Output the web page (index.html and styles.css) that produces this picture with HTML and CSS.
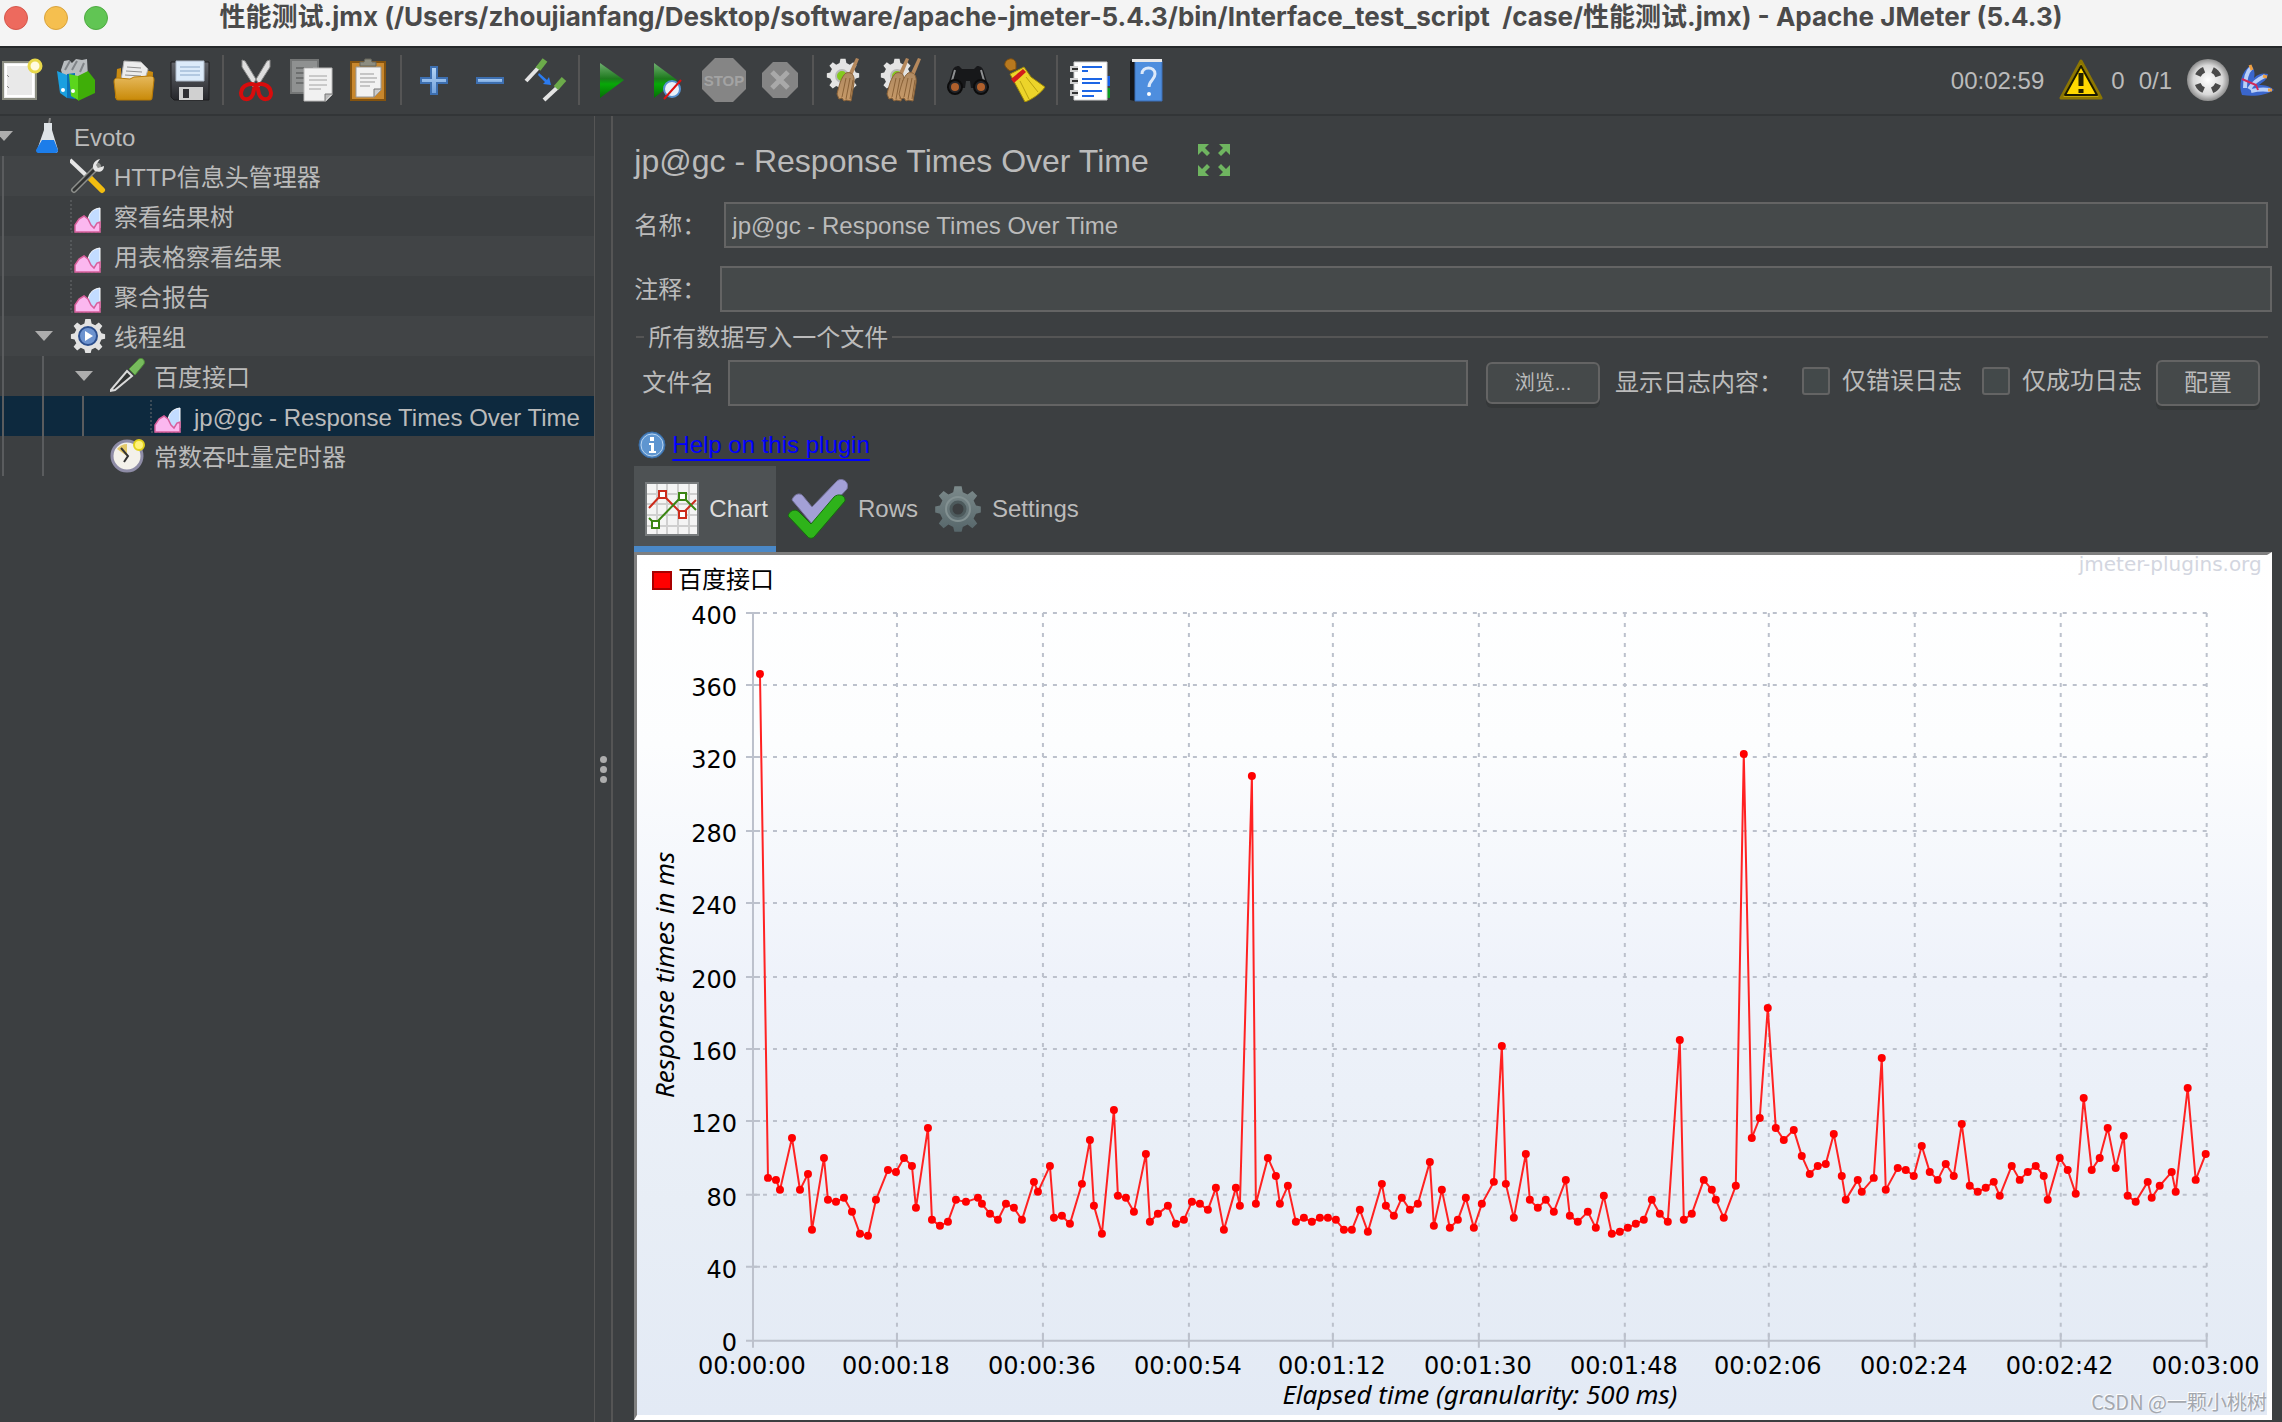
FILE: index.html
```
<!DOCTYPE html>
<html lang="zh-CN">
<head>
<meta charset="utf-8">
<title>性能测试.jmx - Apache JMeter (5.4.3)</title>
<link rel="stylesheet" href="styles.css">
</head>
<body>
<svg class="defs" aria-hidden="true">
  <defs>
    <linearGradient id="green" x1="0" y1="0" x2="0" y2="1"><stop offset="0" stop-color="#6fae6f"/><stop offset=".45" stop-color="#1d7a1d"/><stop offset=".6" stop-color="#08a808"/><stop offset="1" stop-color="#067006"/></linearGradient>
    <linearGradient id="gold" x1="0" y1="0" x2="0" y2="1"><stop offset="0" stop-color="#e6b95c"/><stop offset="1" stop-color="#c98a08"/></linearGradient>
    <linearGradient id="blue" x1="0" y1="0" x2="0" y2="1"><stop offset="0" stop-color="#b5d4f5"/><stop offset="1" stop-color="#6fa0dc"/></linearGradient>
    <linearGradient id="dark" x1="0" y1="0" x2="0" y2="1"><stop offset="0" stop-color="#62646a"/><stop offset="1" stop-color="#26272b"/></linearGradient>
    <linearGradient id="slate" x1="0" y1="0" x2="0" y2="1"><stop offset="0" stop-color="#7c8a8b"/><stop offset="1" stop-color="#56666a"/></linearGradient>
    <linearGradient id="straw" x1="0" y1="0" x2="0" y2="1"><stop offset="0" stop-color="#b08a62"/><stop offset="1" stop-color="#c79a68"/></linearGradient>
    <radialGradient id="ball"><stop offset="0" stop-color="#fff"/><stop offset=".7" stop-color="#d8d8d8"/><stop offset="1" stop-color="#8c8c8c"/></radialGradient>
    <symbol id="result" viewBox="0 0 36 36">
      <path d="M1 2v32h31" fill="none" stroke="#6b6e70" stroke-width="1" stroke-dasharray="2 2"/>
      <path d="M18 24c0-8 4-13 12-14v20l-4-2-3 3z" fill="#c3dcff" stroke="#fff"/>
      <path d="M5 34v-7l4-6 5-3 4 3 3 6 3 3 3-5 3-1v10z" fill="#fbb8ef" stroke="#d85f9c" stroke-width="1.500"/>
    </symbol>
    <symbol id="gearshape" viewBox="0 0 40 40">
      <path d="M17 1h6l1 5 4 2 4-3 4 4-3 4 2 4 4 1v5l-4 1-2 4 3 4-4 4-4-3-4 2-1 4h-6l-1-4-4-2-4 3-4-4 3-4-2-4-4-1v-5l4-1 2-4-3-4 4-4 4 3 4-2z"/>
    </symbol>
    <symbol id="broom" viewBox="0 0 24 44">
      <path d="M20 0l3 1-7 17-4-1z" fill="#b5885c"/>
      <path d="M10 15c6-2 9 3 8 10l-3 18-5-1-2 1-2-3-3 1-2-5c2-8 4-17 9-21z" fill="url(#straw)" stroke="#8a6238"/>
      <path d="M10 20L6 39M14 20l-4 21M17 22l-3 19" stroke="#8a6238" fill="none"/>
    </symbol>
    <marker id="dot" viewBox="-5 -5 10 10" markerWidth="10" markerHeight="10" markerUnits="userSpaceOnUse"><circle r="4" fill="#f00"/></marker>
  </defs>
</svg>

<header class="titlebar">
  <div class="lights"><span class="light close"></span><span class="light min"></span><span class="light max"></span></div>
  <h1 class="title">性能测试.jmx (/Users/zhoujianfang/Desktop/software/apache-jmeter-5.4.3/bin/Interface_test_script&nbsp; /case/性能测试.jmx) - Apache JMeter (5.4.3)</h1>
</header>

<nav class="toolbar">
  <button class="tool" aria-label="新建"><svg viewBox="0 0 44 44"><path d="M3 4h33v37H3z" fill="#ececec" stroke="#8a8c80" stroke-width="2"/><path d="M6 7h27v31H6z" fill="#e9e9e9" stroke="#fff" stroke-width="2"/><circle cx="35" cy="8" r="6" fill="#fffbe0" stroke="#e8d84a" stroke-width="3"/><path d="M7 17l2 2M7 28l2 2" stroke="#888"/></svg></button>
  <button class="tool" aria-label="模板"><svg viewBox="0 0 44 44"><path d="M5 12l3-9 5-1 3 3 4-4 6 1 5-1 1 18H7z" fill="#b9bdc0"/><path d="M9 12l5-9M16 12l5-9M24 14l4-9" stroke="#808488" fill="none" stroke-width="2"/><path d="M1 13l10 4v23l-7-5z" fill="#1aa0e0"/><path d="M11 16l8-1v26l-8-1z" fill="#0b72b8"/><path d="M13 16l9 2v24l-7-4z" fill="#5bd61c"/><path d="M22 18l10-5 7 9v13l-17 8z" fill="#3fae08"/><circle cx="7" cy="32" r="2" fill="#fff"/><circle cx="17" cy="33" r="2" fill="#fff"/></svg></button>
  <button class="tool" aria-label="打开"><svg viewBox="0 0 44 44"><path d="M5 11l4-1v30H3zM34 12l7 2-1 26h-6z" fill="#c98a10"/><path d="M12 3l17 1 7 7-4 14-23-3z" fill="#ececec" stroke="#b0b0b0"/><path d="M15 9l14 1M14 13l16 1M13 17l16 1" stroke="#8e8e8e"/><path d="M2 24c0-3 1-4 4-4l12 1 4-2 16-1c3 0 4 1 4 4l-2 18c0 2-1 2-3 2H7c-2 0-3 0-3-2z" fill="url(#gold)" stroke="#b87a05"/></svg></button>
  <button class="tool" aria-label="保存"><svg viewBox="0 0 44 44"><path d="M3 4h38v38H6l-3-3z" fill="url(#dark)" stroke="#1c1c1e"/><path d="M8 3h28v20H8z" fill="#dcebfa" stroke="#b0bccb"/><path d="M12 9h20M12 13h20M12 17h20" stroke="#8aa7c8"/><path d="M11 29h24v13H11z" fill="#d0d0d0"/><path d="M15 31h6v9h-6z" fill="#303034"/></svg></button>
  <span class="sep"></span>
  <button class="tool" aria-label="剪切"><svg viewBox="0 0 44 44"><path d="M8 2l3 1 15 25-4 3L8 9zM36 2l-3 1-15 25 4 3L36 9z" fill="#dedede" stroke="#8c8c8c"/><path d="M21 27c-4-2-13-1-14 8 0 8 9 8 12 1zM23 27c4-2 13-1 14 8 0 8-9 8-12 1z" fill="none" stroke="#d80c0c" stroke-width="4"/></svg></button>
  <button class="tool" aria-label="复制"><svg viewBox="0 0 44 44"><path d="M1 2h27v33H1z" fill="#8f9191" stroke="#747676" stroke-width="2"/><path d="M6 10h17M6 15h17M6 20h17M6 25h12" stroke="#6d6f6f" stroke-width="2"/><path d="M14 10h28v27l-6 6H14z" fill="#f1f1f1" stroke="#b9b9b9"/><path d="M42 36h-7v7" fill="#bbb" stroke="#777"/><path d="M19 18h18M19 22h18M19 27h18M19 31h12" stroke="#a2a2a2"/></svg></button>
  <button class="tool" aria-label="粘贴"><svg viewBox="0 0 44 44"><path d="M5 4h34v38H5z" fill="#c8872d" stroke="#84530f" stroke-width="2"/><path d="M10 9h25v23l-7 7H10z" fill="#f2f2f2" stroke="#999"/><path d="M35 31h-7v8" fill="#ccc" stroke="#777"/><path d="M14 16h14M14 20h17M14 24h15M14 28h10" stroke="#999"/><path d="M14 8V4h4l1-3h6l1 3h4v4z" fill="#8d8d80" stroke="#66665c"/></svg></button>
  <span class="sep"></span>
  <button class="tool" aria-label="展开"><svg viewBox="0 0 44 44"><path d="M19 9h6v11h10v5H25v11h-6V25H9v-5h10z" fill="url(#blue)" stroke="#3d6fb0" stroke-width="2"/></svg></button>
  <button class="tool" aria-label="折叠"><svg viewBox="0 0 44 44"><path d="M9 20h26v5H9z" fill="url(#blue)" stroke="#3d6fb0" stroke-width="2"/></svg></button>
  <button class="tool" aria-label="切换"><svg viewBox="0 0 44 44"><path d="M2 23L15 9" stroke="#e4e4e4" stroke-width="4"/><path d="M14 11l7-9" stroke="#6cab4a" stroke-width="6"/><path d="M20 42l14-13" stroke="#e4e4e4" stroke-width="4"/><path d="M32 30l8-9" stroke="#6cab4a" stroke-width="6"/><path d="M15 15l8 7 2-3 2 8-8-1 2-2-7-7z" fill="#2b7bf0"/></svg></button>
  <span class="sep"></span>
  <button class="tool" aria-label="启动"><svg viewBox="0 0 44 44"><path d="M10 5l24 17-24 18z" fill="url(#green)"/></svg></button>
  <button class="tool" aria-label="不停顿启动"><svg viewBox="0 0 44 44"><path d="M8 5l23 17L8 40z" fill="url(#green)"/><circle cx="26" cy="31" r="8" fill="#e8f0fa" stroke="#5590cf" stroke-width="2"/><path d="M18 41l17-19" stroke="#e01010" stroke-width="2"/></svg></button>
  <button class="tool" aria-label="停止" disabled><svg viewBox="0 0 44 44"><path d="M13 0h18l13 13v18L31 44H13L0 31V13z" fill="#858585"/><text class="stop" x="22" y="28" text-anchor="middle">STOP</text></svg></button>
  <button class="tool" aria-label="关闭" disabled><svg viewBox="0 0 44 44"><path d="M15 4h14l11 11v14L29 40H15L4 29V15z" fill="#858585"/><path d="M14 14l16 16M30 14L14 30" stroke="#a9a9a9" stroke-width="5"/></svg></button>
  <span class="sep"></span>
  <button class="tool" aria-label="清除"><svg viewBox="0 0 44 44"><use href="#gearshape" width="34" height="34" x="2" fill="#e4e4e4"/><circle cx="18" cy="18" r="6" fill="#84c91f" stroke="#b9b9b9" stroke-width="2"/><use href="#broom" x="10" y="0" width="28" height="44"/></svg></button>
  <button class="tool" aria-label="清除全部"><svg viewBox="0 0 44 44"><use href="#gearshape" width="34" height="34" x="0" fill="#e4e4e4"/><circle cx="17" cy="18" r="6" fill="#84c91f" stroke="#b9b9b9" stroke-width="2"/><use href="#broom" x="4" y="0" width="28" height="44"/><use href="#broom" x="16" y="0" width="28" height="44"/></svg></button>
  <span class="sep"></span>
  <button class="tool" aria-label="查找"><svg viewBox="0 0 44 44"><path d="M6 14c1-4 3-6 7-6l3 3h12l3-3c4 0 6 2 7 6l5 16H25l-1-7h-4l-1 7H1z" fill="#17181a"/><path d="M9 12l-4 14M35 12l4 14" stroke="#8e9092" stroke-width="2"/><circle cx="9" cy="29" r="7" fill="#25262a" stroke="#0c0c0c" stroke-width="2"/><circle cx="35" cy="29" r="7" fill="#25262a" stroke="#0c0c0c" stroke-width="2"/><circle cx="9" cy="29" r="4" fill="#b0602c"/><circle cx="35" cy="29" r="4" fill="#b0602c"/></svg></button>
  <button class="tool" aria-label="重置查找"><svg viewBox="0 0 44 44"><path d="M4 3c4-4 9-2 10 2v6l-6 2c-6-4-6-7-4-10z" fill="#b8791f" stroke="#7e4f0e"/><path d="M8 16l14-7 7 10 14 10c-4 6-12 12-20 15z" fill="#ecd42a" stroke="#9c8708"/><path d="M18 23l9 18M24 19l12 15" stroke="#b8a010"/><path d="M9 21l12-10 3 3-12 11z" fill="#d21b1b"/></svg></button>
  <span class="sep"></span>
  <button class="tool" aria-label="函数助手"><svg viewBox="0 0 44 44"><path d="M36 18h6v10h-6z" fill="#1560e8"/><path d="M36 30h6v10h-6z" fill="#0b9a20"/><path d="M6 4h33v38H6z" fill="#fff" stroke="#d0d0d0"/><path d="M14 9h20M14 13h6M14 21h20M14 25h18M14 33h20M14 38h12" stroke="#1d66e5" stroke-width="2"/><path d="M2 11h8M2 23h8M2 35h8" stroke="#d0d0d0" stroke-width="6"/><path d="M4 11h6M4 23h6M4 35h6" stroke="#333" stroke-width="2"/></svg></button>
  <button class="tool" aria-label="帮助"><svg viewBox="0 0 44 44"><path d="M6 3l5-1v41l-5-1z" fill="#16181c"/><path d="M11 3h27v40H11z" fill="#4e8ede" stroke="#3a6fb8"/><path d="M8 1h30v3H8z" fill="#e8e8e8"/><path d="M18 16c0-8 13-8 13 0 0 6-6 6-6 13" fill="none" stroke="#dce9fa" stroke-width="3"/><circle cx="25" cy="36" r="2" fill="#fff"/></svg></button>
  <div class="status">
    <output class="clock">00:02:59</output>
    <svg class="warn" viewBox="0 0 44 44"><path d="M22 3l20 37H2z" fill="#f7d50c" stroke="#8c7602" stroke-width="3" stroke-linejoin="round"/><path d="M22 8l16 29H6z" fill="#ffd800" stroke="#1c1a00" stroke-width="2" stroke-linejoin="round"/><path d="M22 15v13M22 31v4" stroke="#221f00" stroke-width="5"/></svg>
    <output class="errors">0</output>
    <output class="threads">0/1</output>
    <svg class="remote" viewBox="0 0 44 44"><circle cx="22" cy="22" r="21" fill="url(#ball)"/><circle cx="22" cy="22" r="11" fill="none" stroke="#4a4a4a" stroke-width="6" stroke-dasharray="8.640 8.640" stroke-dashoffset="-4.320"/></svg>
    <svg class="feather" viewBox="0 0 36 36"><path d="M3 33C-1 24 2 9 12 3c4 5 4 9 3 13 5-5 10-5 14-4-1 6-5 8-9 11 6 0 11 1 15 5-7 5-20 7-32 5z" fill="#3a66cc"/><path d="M6 26C6 17 8 10 12 6M10 27c4-6 9-10 16-13M12 29c8-2 12-2 19-1" stroke="#b9cff8" stroke-width="4" fill="none"/><path d="M3 17l14 6 2 5" stroke="#d02a5a" stroke-width="2" fill="none"/><path d="M11 3l2 5M24 14l4 1M29 28h4" stroke="#f0a040" stroke-width="3"/></svg>
  </div>
</nav>

<main class="work">
  <aside class="side">
    <ul class="tree">
      <li class="row"><span class="twist"><svg class="arrow" viewBox="0 0 18 10"><path d="M0 0h18L9 10z"/></svg></span><svg class="ticon" viewBox="0 0 36 36"><path d="M20 0l-1 6" stroke="#888" stroke-width="2"/><path d="M14 5h8v7l6 20c0 3-2 3-4 3H10c-2 0-3-1-3-3l7-20z" fill="#dfe4e8"/><path d="M12 22h12l4 10c0 3-2 3-4 3H10c-2 0-4 0-4-3z" fill="#1c7dea"/></svg><span class="name">Evoto</span></li>
      <li class="row"><i class="guide"></i><span class="twist"></span><svg class="ticon" viewBox="0 0 36 36"><path d="M0 2l18 17" stroke="#e6e6e6" stroke-width="4"/><path d="M20 20l12 12" stroke="#f2bd10" stroke-width="6" stroke-linecap="round"/><path d="M28 8L4 32" stroke="#8d8f8c" stroke-width="6" stroke-linecap="round"/><path d="M26 10L4 32" stroke="#303232" stroke-width="3" stroke-linecap="round"/><path d="M30 1l-4 6 2 3 6-2c0 5-4 7-9 5-4-3-2-11 5-12z" fill="#e6e6e6"/></svg><span class="name">HTTP信息头管理器</span></li>
      <li class="row"><i class="guide"></i><span class="twist"></span><svg class="ticon"><use href="#result"/></svg><span class="name">察看结果树</span></li>
      <li class="row"><i class="guide"></i><span class="twist"></span><svg class="ticon"><use href="#result"/></svg><span class="name">用表格察看结果</span></li>
      <li class="row"><i class="guide"></i><span class="twist"></span><svg class="ticon"><use href="#result"/></svg><span class="name">聚合报告</span></li>
      <li class="row"><i class="guide"></i><span class="twist"><svg class="arrow" viewBox="0 0 18 10"><path d="M0 0h18L9 10z"/></svg></span><svg class="ticon" viewBox="0 0 36 36"><use href="#gearshape" width="36" height="36" fill="#e2e2e2"/><circle cx="18" cy="18" r="9" fill="#6d93cf" stroke="#2c4f8e" stroke-width="2"/><path d="M15 13l8 5-8 5z" fill="#fff"/></svg><span class="name">线程组</span></li>
      <li class="row"><i class="guide"></i><i class="guide"></i><span class="twist"><svg class="arrow" viewBox="0 0 18 10"><path d="M0 0h18L9 10z"/></svg></span><svg class="ticon" viewBox="0 0 36 36"><path d="M0 33l17-20 5 5L5 32z" fill="#303232" stroke="#dadada" stroke-width="2"/><path d="M19 11l8-8c3-5 9-2 7 3l-9 11z" fill="#77bb5d" stroke="#4d8a38"/></svg><span class="name">百度接口</span></li>
      <li class="row selected"><i class="guide"></i><i class="guide"></i><i class="guide"></i><span class="twist"></span><svg class="ticon"><use href="#result"/></svg><span class="name">jp@gc - Response Times Over Time</span></li>
      <li class="row"><i class="guide"></i><i class="guide"></i><span class="twist"></span><svg class="ticon" viewBox="0 0 36 36"><circle cx="17" cy="18" r="15" fill="#f3f1ea" stroke="#8e8ca6" stroke-width="3"/><path d="M17 18V6c-4 0-8 2-10 5z" fill="#e4c96a"/><path d="M11 10l7 8-4 6" stroke="#333" stroke-width="2" fill="none"/><circle cx="29" cy="7" r="5" fill="#fff27a" stroke="#e2d21c" stroke-width="2"/></svg><span class="name">常数吞吐量定时器</span></li>
    </ul>
  </aside>
  <div class="divider"><i></i><i></i><i></i></div>

  <section class="pane">
    <div class="head">
      <h2 class="heading">jp@gc - Response Times Over Time</h2>
      <svg class="expand" viewBox="0 0 34 34"><g fill="#6fb560"><path d="M1 1h11l-4 4 5 5-3 3-5-5-4 4z"/><path d="M33 1v11l-4-4-5 5-3-3 5-5-4-4z"/><path d="M1 33V22l4 4 5-5 3 3-5 5 4 4z"/><path d="M33 33H22l4-4-5-5 3-3 5 5 4-4z"/></g></svg>
    </div>
    <div class="field"><label for="name">名称：</label><input id="name" class="text" type="text" value="jp@gc - Response Times Over Time"></div>
    <div class="field wide"><label for="comment">注释：</label><input id="comment" class="text" type="text"></div>
    <fieldset class="file">
      <legend>所有数据写入一个文件</legend>
      <div class="filerow">
        <label for="fname">文件名</label><input id="fname" class="text" type="text">
        <button class="btn small">浏览...</button>
        <span class="log">显示日志内容：</span>
        <label class="check"><input type="checkbox">仅错误日志</label>
        <label class="check"><input type="checkbox">仅成功日志</label>
        <button class="btn">配置</button>
      </div>
    </fieldset>
    <div class="help">
      <svg viewBox="0 0 28 28"><circle cx="14" cy="14" r="13" fill="#4f86c2" stroke="#3a6ea8"/><circle cx="14" cy="14" r="11" fill="#5e95d0" stroke="#b8d4f0"/><path d="M12 6h4v4h-4zM11 12h5v8h2v2h-7v-2h2v-6h-2z" fill="#fff"/></svg>
      <a href="#help">Help on this plugin</a>
    </div>
    <div class="tabs" role="tablist">
      <button class="tab active" role="tab" aria-selected="true"><svg class="i54" viewBox="0 0 54 54"><path d="M1 1h52v52H1z" fill="#f4f4f4" stroke="#777b7d" stroke-width="2"/><path d="M12 2v50M22 2v50M33 2v50M44 2v50M2 12h50M2 22h50M2 33h50M2 44h50" stroke="#cfcfcf" stroke-width="2"/><path d="M4 26l13-14 20 20 14-14" fill="none" stroke="#cc2b1c" stroke-width="2"/><path d="M4 36l6 6 27-28 14 14" fill="none" stroke="#3a8512" stroke-width="2"/><path d="M14 9h7v7h-7zM34 29h7v7h-7z" fill="#fff" stroke="#cc2b1c" stroke-width="2"/><path d="M34 11h7v7h-7zM7 39h7v7H7z" fill="#fff" stroke="#3a8512" stroke-width="2"/></svg>Chart</button>
      <button class="tab rows" role="tab"><svg class="i60" viewBox="0 0 60 60"><path d="M4 21c2-6 8-8 11-4l9 11L49 2c4-4 13 0 10 8L25 46z" fill="#a3a0d6" stroke="#77749f"/><path d="M0 37c1-5 7-8 11-4l12 12 23-27c4-4 12-2 11 4L27 57c-2 3-6 3-8 0z" fill="#2eb31a" stroke="#176e0e"/></svg>Rows</button>
      <button class="tab" role="tab"><svg class="i48" viewBox="0 0 48 48"><use href="#gearshape" width="48" height="48" fill="url(#slate)"/><circle cx="24" cy="24" r="12" fill="none" stroke="#839192" stroke-width="2"/><circle cx="24" cy="24" r="7" fill="#3c3f41" stroke="#4d5a5c" stroke-width="3"/></svg>Settings</button>
    </div>
    <div class="panel">
      <svg class="chart" viewBox="637 555 1630 860" role="img" aria-label="Response Times Over Time">
        <path d="M653 572h18v17h-18z" fill="#f00" stroke="#a80000" stroke-width="2"/>
        <text class="legendtext" x="678" y="588">百度接口</text>
        <text class="brand" x="2262" y="571" text-anchor="end">jmeter-plugins.org</text>
        <path class="grid" d="M753 613H2207M753 685H2207M753 757H2207M753 831H2207M753 903H2207M753 977H2207M753 1049H2207M753 1121H2207M753 1195H2207M753 1267H2207M897 613V1341M1043 613V1341M1189 613V1341M1333 613V1341M1479 613V1341M1625 613V1341M1769 613V1341M1915 613V1341M2061 613V1341M2207 613V1341"/>
        <path class="axis" d="M753 613V1341H2207M746 613h14M746 685h14M746 757h14M746 831h14M746 903h14M746 977h14M746 1049h14M746 1121h14M746 1195h14M746 1267h14M746 1341h14M753 1334v14M897 1334v14M1043 1334v14M1189 1334v14M1333 1334v14M1479 1334v14M1625 1334v14M1769 1334v14M1915 1334v14M2061 1334v14M2207 1334v14"/>
        <g class="num" text-anchor="end">
          <text x="737" y="624">400</text><text x="737" y="696">360</text><text x="737" y="768">320</text><text x="737" y="842">280</text><text x="737" y="914">240</text><text x="737" y="988">200</text><text x="737" y="1060">160</text><text x="737" y="1132">120</text><text x="737" y="1206">80</text><text x="737" y="1278">40</text><text x="737" y="1351">0</text>
        </g>
        <g class="num" text-anchor="middle">
          <text x="752" y="1374">00:00:00</text><text x="896" y="1374">00:00:18</text><text x="1042" y="1374">00:00:36</text><text x="1188" y="1374">00:00:54</text><text x="1332" y="1374">00:01:12</text><text x="1478" y="1374">00:01:30</text><text x="1624" y="1374">00:01:48</text><text x="1768" y="1374">00:02:06</text><text x="1914" y="1374">00:02:24</text><text x="2060" y="1374">00:02:42</text><text x="2206" y="1374">00:03:00</text>
        </g>
        <text class="axistitle" x="1480" y="1404" text-anchor="middle">Elapsed time (granularity: 500 ms)</text>
        <text class="axistitle" transform="translate(674 975) rotate(-90)" text-anchor="middle">Response times in ms</text>
        <polyline class="series" points="760,674 768,1178 776,1180 780,1190 792,1138 800,1190 808,1174 812,1230 824,1158 828,1200 836,1202 844,1198 852,1212 860,1234 868,1236 876,1200 888,1170 896,1172 904,1158 912,1166 916,1208 928,1128 932,1220 940,1226 948,1222 956,1200 966,1202 978,1198 982,1204 990,1214 998,1220 1006,1204 1014,1208 1022,1220 1034,1182 1038,1192 1050,1166 1054,1218 1062,1216 1070,1224 1082,1184 1090,1140 1094,1206 1102,1234 1114,1110 1118,1196 1126,1198 1134,1212 1146,1154 1150,1222 1158,1214 1168,1206 1176,1224 1184,1220 1192,1202 1200,1204 1208,1210 1216,1188 1224,1230 1236,1188 1240,1206 1252,776 1256,1204 1268,1158 1276,1176 1280,1204 1288,1186 1296,1222 1304,1218 1312,1222 1320,1218 1328,1218 1336,1220 1344,1230 1352,1230 1360,1210 1368,1232 1382,1184 1386,1206 1394,1216 1402,1198 1410,1210 1418,1204 1430,1162 1434,1226 1442,1190 1450,1228 1458,1220 1466,1198 1474,1228 1482,1204 1494,1182 1502,1046 1506,1184 1514,1218 1526,1154 1530,1200 1538,1208 1546,1200 1554,1212 1566,1180 1570,1216 1578,1222 1588,1212 1596,1228 1604,1196 1612,1234 1620,1232 1628,1228 1636,1224 1644,1220 1652,1200 1660,1214 1668,1222 1680,1040 1684,1220 1692,1214 1704,1180 1712,1190 1716,1200 1724,1218 1736,1186 1744,754 1752,1138 1760,1118 1768,1008 1776,1128 1784,1140 1794,1130 1802,1156 1810,1174 1818,1166 1826,1164 1834,1134 1842,1176 1846,1200 1858,1180 1862,1192 1874,1178 1882,1058 1886,1190 1898,1168 1906,1170 1914,1176 1922,1146 1930,1172 1938,1180 1946,1164 1954,1176 1962,1124 1970,1186 1978,1192 1986,1188 1994,1182 2000,1196 2012,1166 2020,1180 2028,1172 2036,1166 2044,1176 2048,1200 2060,1158 2068,1170 2076,1194 2084,1098 2092,1170 2100,1158 2108,1128 2116,1168 2124,1136 2128,1196 2136,1202 2148,1182 2152,1198 2160,1186 2172,1172 2176,1192 2188,1088 2196,1180 2206,1154"/>
      </svg>
      <span class="watermark">CSDN @一颗小桃树</span>
    </div>
  </section>
</main>
</body>
</html>
```

FILE: styles.css
```
* { box-sizing: border-box; }
body {
  margin: 0;
  min-height: 100vh;
  display: flex;
  flex-direction: column;
  background: #3c3f41;
  color: #bbb;
  font: 24px/32px "Liberation Sans", "Noto Sans CJK SC", sans-serif;
}
button, input { font: inherit; color: inherit; }
button { padding: 0; border: 0; background: none; }
svg { display: block; flex: none; }
.defs { position: absolute; width: 0; height: 0; }

.titlebar {
  position: relative;
  height: 46px;
  background: #f4f4f4;
  padding: 5px 4px;
}
.lights { position: absolute; left: 4px; top: 6px; display: flex; gap: 16px; }
.light { width: 24px; height: 24px; border-radius: 50%; border: 1px solid; }
.close { background: #ed6a5e; border-color: #d5574c; }
.min { background: #f5bf4f; border-color: #d9a33c; }
.max { background: #61c554; border-color: #4eab42; }
.title {
  margin: 0;
  text-align: center;
  font: bold 26px/24px Inter, "Noto Sans CJK SC", sans-serif;
  color: #4a4a4a;
  white-space: nowrap;
}

.toolbar {
  display: flex;
  align-items: center;
  height: 70px;
  padding-bottom: 2px;
  border-top: 2px solid #25282a;
  border-bottom: 2px solid #323537;
}
.tool { width: 56px; display: flex; justify-content: center; }
.tool:first-child { margin-left: -6px; }
.tool svg { width: 44px; height: 44px; }
.sep { width: 2px; height: 50px; margin: 0 4px; background: #555; }
.stop { font: bold 15px "Liberation Sans", sans-serif; fill: #a3a3a3; }
.status { margin-left: auto; display: flex; align-items: center; padding-right: 6px; }
.status output { padding-top: 2px; }
.warn, .remote { width: 44px; height: 44px; }
.warn { margin: 0 8px 0 15px; }
.threads { margin: 0 14px; }
.feather { width: 38px; height: 36px; margin-left: 8px; }

.work { flex: 1; display: flex; }
.side { flex: 0 0 calc(26% + 2px); border-right: 1px solid #555; }
.tree { margin: 0; padding: 0; list-style: none; overflow: hidden; }
.row { display: flex; align-items: center; height: 40px; white-space: nowrap; }
.row:nth-child(even) { background: #414446; }
.row.selected { background: #0d293e; }
.name { padding-top: 3px; }
.guide { width: 40px; height: 40px; background: linear-gradient(90deg, transparent 2px, #5a5c5e 2px 4px, transparent 4px); }
.twist { width: 30px; }
.arrow { width: 18px; height: 10px; margin-left: -5px; fill: #adadad; }
.ticon { width: 36px; height: 36px; margin-right: 8px; }
.divider {
  flex: 0 0 18px;
  display: flex;
  flex-direction: column;
  justify-content: center;
  align-items: center;
  gap: 3px;
  border-right: 2px solid #555;
}
.divider i { width: 7px; height: 7px; border-radius: 50%; background: #adadad; }

.pane { flex: 1; min-width: 0; display: flex; flex-direction: column; padding: 24px 10px 2px 21px; }
.head { display: flex; align-items: center; gap: 48px; height: 42px; }
.heading { margin: 0; font-size: 32px; line-height: 42px; font-weight: normal; }
.expand { width: 34px; height: 34px; margin-bottom: 2px; }
.field { display: flex; align-items: center; margin-top: 20px; padding-right: 4px; }
.field label { flex: 0 0 90px; padding-top: 2px; }
.field.wide { margin-top: 18px; padding-right: 0; }
.field.wide label { flex-basis: 86px; }
.text {
  flex: 1;
  min-width: 0;
  height: 46px;
  padding: 2px 6px 0;
  border: 2px solid #646464;
  background: #45494a;
  border-radius: 0;
}
.file { margin: 8px 4px 0 2px; padding: 6px 8px 0 6px; border: 0; border-top: 2px solid #555; min-width: 0; }
.file legend { padding: 2px 4px 0; margin-left: 2px; line-height: 32px; }
.filerow { display: flex; align-items: center; }
.filerow .text { margin-left: 14px; }
.btn {
  width: 104px;
  height: 46px;
  border: 2px solid #646464;
  border-radius: 6px;
  background: #45494a;
  box-shadow: 0 4px 0 #353839;
}
.btn.small { width: 114px; height: 42px; margin-left: 18px; font-size: 20px; }
.log { margin-left: 15px; width: 187px; }
.check { display: flex; align-items: center; gap: 12px; margin-right: 20px; padding-bottom: 4px; }
.check:last-of-type { margin-right: 14px; }
.check input {
  appearance: none;
  width: 28px;
  height: 28px;
  margin: 0;
  border: 2px solid #646464;
  border-radius: 3px;
  background: #43494a;
}
.help { display: flex; align-items: center; gap: 6px; height: 32px; margin: 23px 0 5px 4px; }
.help svg { width: 28px; height: 28px; }
.help a { color: #00f; text-decoration: underline; text-decoration-thickness: 2px; text-underline-offset: 6px; }
.tabs { display: flex; height: 86px; }
.tab { display: flex; align-items: center; gap: 10px; padding: 6px 8px 0; border-bottom: 6px solid transparent; }
.tab.active { background: #4e5254; border-color: #4a88c7; color: #ddd; padding-left: 11px; }
.tab.rows { padding-left: 12px; }
.i54 { width: 54px; height: 54px; }
.i60 { width: 60px; height: 60px; }
.i48 { width: 48px; height: 48px; }
.panel {
  position: relative;
  flex: 1;
  border: 3px solid #7f7f7f;
  border-right: 5px solid #fff;
  border-bottom: 5px solid #fff;
  background: linear-gradient(#fff 0%, #fcfdfe 22%, #eef2fa 50%, #e8eef6 75%, #e3eaf5 100%);
}
.chart { width: 100%; height: auto; }
.chart text { fill: #000; }
.legendtext { font: 24px "Noto Sans CJK SC", sans-serif; }
.chart .brand { font: 20px "DejaVu Sans", sans-serif; fill: #d3d6e0; }
.grid { fill: none; stroke: #bcc1cc; stroke-width: 2; stroke-dasharray: 4 6; }
.axis { fill: none; stroke: #bcc1cc; stroke-width: 2; }
.num { font: 24px "DejaVu Sans", sans-serif; }
.axistitle { font: italic 26px "Noto Sans", sans-serif; }
.series { fill: none; stroke: #f22; stroke-width: 2; marker-start: url(#dot); marker-mid: url(#dot); marker-end: url(#dot); }
.watermark {
  position: absolute;
  right: 0;
  bottom: 0;
  font: 20px/26px "Noto Sans CJK SC", sans-serif;
  color: #a4a8ae;
  text-shadow: -1px -1px 0 #fff;
}
```
